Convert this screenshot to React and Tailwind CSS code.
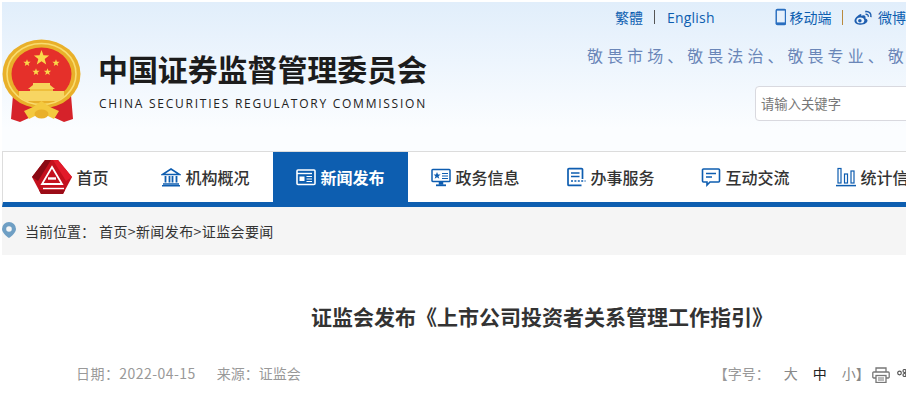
const cjk = { fontFamily: '"Noto Sans CJK SC","Noto Sans",sans-serif' };

function Star({ cx, cy, r, fill = "#fbd84a" }) {
  const pts = [];
  for (let i = 0; i < 10; i++) {
    const a = (-90 + i * 36) * Math.PI / 180;
    const rr = i % 2 ? r * 0.42 : r;
    pts.push(`${(cx + rr * Math.cos(a)).toFixed(2)},${(cy + rr * Math.sin(a)).toFixed(2)}`);
  }
  return <polygon points={pts.join(" ")} fill={fill} />;
}

function Emblem() {
  return (
    <svg width="80" height="84" viewBox="0 0 80 84" className="shrink-0">
      <path d="M11 56 L9 80 L18 83 L29 78 L40 72 L51 78 L62 83 L71 80 L69 56 Z" fill="#d6222a" />
      <ellipse cx="39.5" cy="35" rx="39" ry="34.5" fill="#e9b02a" />
      <ellipse cx="39.5" cy="35" rx="34.5" ry="30.5" fill="none" stroke="#f9dc6e" strokeWidth="1.6" />
      <ellipse cx="39.5" cy="35" rx="30" ry="26.5" fill="#e5302a" />
      <Star cx={39.5} cy={19} r={8} />
      <Star cx={25} cy={24} r={3.8} />
      <Star cx={54} cy={24} r={3.8} />
      <Star cx={34} cy={33} r={3.8} />
      <Star cx={45.5} cy={33} r={3.8} />
      <path d="M31 44 H48 V46 L53 50 H26 L31 46 Z" fill="#f6d35a" />
      <rect x="28" y="50" width="23" height="4" fill="#eebf3c" />
      <path d="M17 52 H62 V58 L55 62 H24 L17 58 Z" fill="#f7d562" />
      <path d="M22 72 L31 68 L39.5 62 L48 68 L57 72 L52 80 L44 76 H35 L27 80 Z" fill="#f4c93f" />
      <ellipse cx="39.5" cy="75" rx="7" ry="4.5" fill="#e9b02a" />
    </svg>
  );
}

function CsrcLogo() {
  return (
    <svg width="40" height="34" viewBox="0 0 40 34">
      <path d="M13 0 H26 L40 17 L31 34 H9 L0 17 Z" fill="#c4101d" />
      <path d="M13 0 L19 0 L6 21 L0 17 Z" fill="#8a0a14" />
      <path d="M26 0 L40 17 L34 21 L21 0 Z" fill="#e21a2a" />
      <path d="M20 7 L30 24 H10 Z" fill="none" stroke="#fff" strokeWidth="1.8" />
      <path d="M16 18.5 H24" stroke="#fff" strokeWidth="2.4" />
      <path d="M11 28.5 H32" stroke="#fff" strokeWidth="1.4" />
      <path d="M9 34 H31 L33 30 H7 Z" fill="#9b0c17" />
    </svg>
  );
}

const I = ({ children, w = 20, h = 20, white }) => (
  <svg width={w} height={h} viewBox="0 0 20 20" fill="none" stroke={white ? "#fff" : "#0e5db0"} strokeWidth="1.5" className="shrink-0">
    {children}
  </svg>
);

const icons = {
  bank: (
    <I>
      <path d="M10 2 L18.5 7.5 H1.5 Z" />
      <path d="M4.5 9 V15.5 M8.5 9 V15.5 M11.5 9 V15.5 M15.5 9 V15.5" strokeWidth="1.8" />
      <path d="M2 17 H18 M1 18.8 H19" />
    </I>
  ),
  news: (
    <I white>
      <rect x="1" y="3" width="18" height="14.5" rx="1" strokeWidth="1.6" />
      <path d="M1 6.5 H16" strokeWidth="1.4" />
      <rect x="3.5" y="9.5" width="5" height="4.5" fill="#fff" stroke="none" />
      <path d="M10.5 9.5 H16 M10.5 12 H16 M10.5 14.5 H16" strokeWidth="1" />
    </I>
  ),
  gov: (
    <I>
      <rect x="1" y="2.5" width="18" height="12" rx="0.8" />
      <polygon points="6,5 7,7.6 9.6,7.6 7.5,9.2 8.3,11.8 6,10.2 3.7,11.8 4.5,9.2 2.6,7.6 5,7.6" fill="#0e5db0" stroke="none" />
      <path d="M11 6.5 H17 M11 9 H17 M11 11.5 H17" strokeWidth="1.1" />
      <path d="M8.5 15 V17 H11.5 V15" fill="#0e5db0" />
      <path d="M5 18.3 H15" strokeWidth="1.8" />
    </I>
  ),
  service: (
    <I>
      <path d="M16.5 12 V2.6 A1 1 0 0 0 15.5 1.6 H3 A1 1 0 0 0 2 2.6 V17.4 A1 1 0 0 0 3 18.4 H15.5" strokeWidth="1.7" />
      <path d="M5 6 H13.5 M5 9.5 H13.5" />
      <path d="M5 14 H19.5" strokeDasharray="2 1.4" strokeWidth="1.5" />
    </I>
  ),
  chat: (
    <I>
      <path d="M2.5 2 H17.5 A1 1 0 0 1 18.5 3 V14 A1 1 0 0 1 17.5 15 H9 L6 18 V15 H2.5 A1 1 0 0 1 1.5 14 V3 A1 1 0 0 1 2.5 2 Z" strokeWidth="1.6" />
      <path d="M5 6.5 H15 M5 10 H11" />
    </I>
  ),
  stat: (
    <I>
      <rect x="2" y="1.5" width="3" height="14.5" strokeWidth="1.2" />
      <rect x="8.5" y="7" width="3" height="9" strokeWidth="1.2" />
      <rect x="15" y="4" width="3" height="12" strokeWidth="1.2" />
      <path d="M0 18.6 H20" />
    </I>
  ),
};

function NavItem({ icon, label, active }) {
  return (
    <div className={`w-[135px] h-[50px] shrink-0 flex items-center justify-center gap-[4px] pb-[1px] text-[16px] ${active ? "bg-[#0d5eb0] text-white font-bold" : "text-[#333] font-medium"}`}>
      {icon}
      <span className="whitespace-nowrap">{label}</span>
    </div>
  );
}

export default function App() {
  return (
    <div className="w-[906px] h-[414px] overflow-hidden bg-white pl-[2px] pt-[2px] text-[#333]" style={cjk}>
      <div className="w-[904px] h-[412px] overflow-hidden">
        <header className="h-[149px] flex bg-gradient-to-b from-[#e1eefb] from-0% to-[#fbfdff] to-[85%]">
          <div className="w-[585px] shrink-0 pt-[37px] flex items-start">
            <Emblem />
            <div className="ml-[16px] pt-[9px]">
              <div className="text-[30px] leading-[40px] font-bold text-[#1c1c1c] whitespace-nowrap tracking-[-0.1px]">中国证券监督管理委员会</div>
              <div className="mt-[8px] ml-[1px] text-[12px] leading-[16px] tracking-[1.75px] text-[#222] whitespace-nowrap" style={{ fontFamily: '"Open Sans",sans-serif' }}>CHINA SECURITIES REGULATORY COMMISSION</div>
            </div>
          </div>
          <div className="flex-1 min-w-0 overflow-hidden">
            <div className="flex items-center h-[30px] text-[14px] whitespace-nowrap text-[#0d5eb0]">
              <span className="ml-[28px]">繁體</span>
              <span className="ml-[11px] w-[1px] h-[14px] bg-[#555]" />
              <span className="ml-[12px] tracking-[0.2px]" style={{ fontFamily: '"Open Sans",sans-serif' }}>English</span>
              <svg width="12" height="18" viewBox="0 0 12 18" className="ml-[60px]">
                <rect x="0.5" y="0.5" width="11" height="17" rx="2" fill="#2a6fc0" />
                <rect x="2" y="2.5" width="8" height="12" fill="#e6f0fb" />
              </svg>
              <span className="ml-[3px] text-[14px]">移动端</span>
              <span className="ml-[11px] w-[1px] h-[15px] bg-[#b98a3e]" />
              <svg width="19" height="15" viewBox="0 0 19 15" className="ml-[11px]">
                <path d="M7 4 C3.5 5.5 0.5 8.5 0.5 11 C0.5 13.5 3.5 14.8 7 14.8 C11 14.8 13.8 12.5 13.8 10.5 C13.8 9 12.3 8.6 11.7 8.4 C12.2 7 11.5 5 9.5 5.2 C8.6 5.3 8 5.7 7.4 6 C7.7 4.8 7.6 4 7 4 Z" fill="#1f5fb0" />
                <ellipse cx="6.5" cy="10.5" rx="4" ry="3" fill="#e8f2fc" />
                <circle cx="6" cy="10.8" r="1.8" fill="#1f5fb0" />
                <path d="M11.5 1.5 C15.5 0.8 18 3.5 17.3 7.2" fill="none" stroke="#1f5fb0" strokeWidth="1.6" />
                <path d="M11.8 4.2 C13.5 4 14.8 5 14.6 6.8" fill="none" stroke="#1f5fb0" strokeWidth="1.3" />
              </svg>
              <span className="ml-[5px] text-[14px]">微博</span>
            </div>
            <div className="mt-[11px] text-[16px] leading-[24px] tracking-[4.05px] text-[#6a86b8] whitespace-nowrap">敬畏市场、敬畏法治、敬畏专业、敬畏风险</div>
            <div className="mt-[19px] ml-[168px] h-[35px] w-[200px] bg-white border border-[#d9d9df] rounded-[4px] flex items-center pl-[5px] text-[13.33px] text-[#777]">请输入关键字</div>
          </div>
        </header>

        <nav className="border-t border-t-[#dcdcdc] border-l border-l-[#ddd] border-b-[5px] border-b-[#0d5eb0] flex h-[56px] overflow-hidden">
          <NavItem icon={<CsrcLogo />} label="首页" />
          <NavItem icon={icons.bank} label="机构概况" />
          <NavItem icon={icons.news} label="新闻发布" active />
          <NavItem icon={icons.gov} label="政务信息" />
          <NavItem icon={icons.service} label="办事服务" />
          <NavItem icon={icons.chat} label="互动交流" />
          <NavItem icon={icons.stat} label="统计信息" />
        </nav>

        <div className="h-[48px] bg-[#f5f5f5] flex items-center text-[14px] text-[#333] whitespace-nowrap">
          <svg width="14" height="16" viewBox="0 0 14 16" className="mb-[2px]">
            <path fillRule="evenodd" d="M7 0 A7 7 0 0 1 14 7 C14 10.5 10 14 7 16 C4 14 0 10.5 0 7 A7 7 0 0 1 7 0 Z M7 4.2 A2.8 2.8 0 1 0 7 9.8 A2.8 2.8 0 1 0 7 4.2 Z" fill="#6f9fc4" />
          </svg>
          <span className="ml-[9px]">当前位置：</span>
          <span className="ml-[4px] tracking-[0.4px]">首页&gt;新闻发布&gt;证监会要闻</span>
        </div>

        <h1 className="mt-[46px] pl-[309px] text-[21px] leading-[30px] font-bold text-[#333] whitespace-nowrap">证监会发布《上市公司投资者关系管理工作指引》</h1>

        <div className="mt-[30px] flex items-center text-[14px] leading-[24px] text-[#999] whitespace-nowrap">
          <span className="ml-[74px] tracking-[0.45px]">日期：2022-04-15</span>
          <span className="ml-[21px]">来源：证监会</span>
          <span className="ml-[413px]">【字号：</span>
          <span className="ml-[14px] text-[#888]">大</span>
          <span className="ml-[15px] text-[#222]">中</span>
          <span className="ml-[15px] text-[#888]">小】</span>
          <svg width="18" height="16" viewBox="0 0 18 16" fill="none" stroke="#777" strokeWidth="1.3" className="ml-[2px] mt-[3px] shrink-0">
            <path d="M4 5 V1 H14 V5" />
            <path d="M4 11 H1.5 A1 1 0 0 1 0.8 10 V6 A1 1 0 0 1 1.8 5 H16.2 A1 1 0 0 1 17.2 6 V10 A1 1 0 0 1 16.5 11 H14" />
            <rect x="4" y="8.5" width="10" height="7" />
            <path d="M6 11 H12 M6 13 H12" strokeWidth="1" />
          </svg>
          <svg width="10" height="8" viewBox="0 0 10 8" fill="none" stroke="#555" strokeWidth="1.2" className="ml-[7px] shrink-0">
            <circle cx="2.5" cy="4" r="1.8" />
            <circle cx="7.5" cy="2" r="1.5" />
            <circle cx="7.5" cy="6" r="1.5" />
          </svg>
        </div>
      </div>
    </div>
  );
}
